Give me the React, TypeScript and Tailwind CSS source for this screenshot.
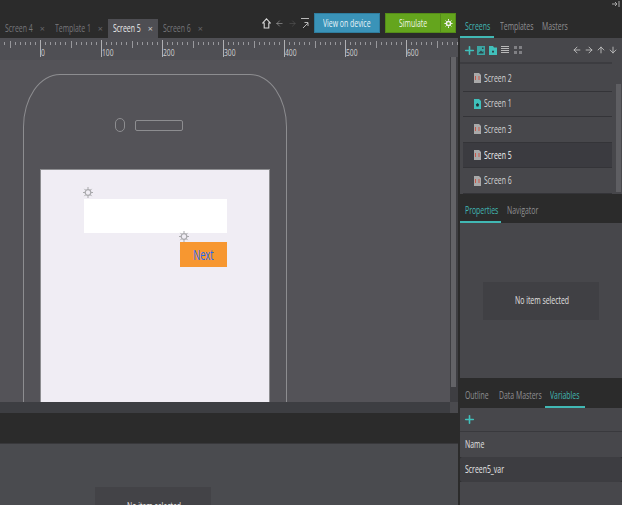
import React from "react";
import { ArrowLeft, ArrowRight, ArrowUp, ArrowDown, Plus } from "lucide-react";

const font = { fontFamily: '"Open Sans", "Noto Sans", sans-serif' };

// The reference's text is horizontally squeezed: each label sits in a fixed-width slot.
function T({ children, className = "" }: { children: React.ReactNode; className?: string }) {
  return (
    <span className={"block shrink-0 " + className}>
      <span className="inline-block origin-left scale-x-[0.69] whitespace-nowrap">{children}</span>
    </span>
  );
}

function Ruler() {
  const ticks: React.ReactNode[] = [];
  const step = 61 / 12;
  for (let i = -7; i < 84; i++) {
    const x = Math.round(40 + i * step) + 0.5;
    const n = ((i % 12) + 12) % 12;
    const y1 = n === 0 ? 2 : n === 6 ? 3 : 4;
    const y2 = n === 0 ? 19 : n === 6 ? 10 : 7;
    ticks.push(
      <line key={i} x1={x} x2={x} y1={y1} y2={y2} stroke={n === 0 ? "#b0b0b3" : "#98989c"} strokeWidth="1" />
    );
  }
  return (
    <svg width="458" height="22" className="block">
      {ticks}
    </svg>
  );
}

function RulerLabels() {
  const labels = [0, 100, 200, 300, 400, 500, 600];
  return (
    <div className="absolute left-0 top-0 h-[22px] w-full">
      {labels.map((l, i) => (
        <span
          key={l}
          className="absolute top-[9px] origin-left scale-x-[0.75] text-[9px] leading-[12px] text-[#d0d0d2]"
          style={{ left: 41 + i * 61 }}
        >
          {l}
        </span>
      ))}
    </div>
  );
}

function Tab({ label, w, active }: { label: string; w: string; active?: boolean }) {
  return (
    <div
      className={
        "flex h-[19px] items-center pl-[5px] text-[10px] " +
        (active ? "w-[50px] bg-[#4e4e53] text-[#ececec]" : "text-[#77777b]")
      }
    >
      <T className={w}>{label}</T>
      <span className={"ml-auto mr-[5px] text-[9px] " + (active ? "text-[#c8c8c8]" : "text-[#66666a]")}>×</span>
    </div>
  );
}

function FileIcon({ teal }: { teal?: boolean }) {
  if (teal) {
    return (
      <svg width="7" height="10" viewBox="0 0 7 10" className="shrink-0">
        <path d="M0 0h5l2 2v8H0z" fill="#3fc0bb" />
        <path d="M3.5 4l1.6 1.4-.6 2h-2l-.6-2z" fill="#1f2f33" />
      </svg>
    );
  }
  return (
    <svg width="7" height="10" viewBox="0 0 7 10" className="shrink-0">
      <path d="M0 0h5l2 2v8H0z" fill="#a9a9a9" />
      <rect x="1" y="3" width="1" height="4" fill="#c9594a" />
      <rect x="4.5" y="3" width="1" height="4" fill="#c9594a" />
    </svg>
  );
}

function ScreenRow({ label, teal, active }: { label: string; teal?: boolean; active?: boolean }) {
  return (
    <div
      className={
        "flex h-[25.6px] items-center border-b border-[#343438] pl-[11px] text-[10px] " +
        (active ? "bg-[#3b3b40] text-[#f4f4f4]" : "text-[#d6d6d6]")
      }
    >
      <FileIcon teal={teal} />
      <T className="ml-[3px] w-[28px]">{label}</T>
    </div>
  );
}

function Gear({ className }: { className: string }) {
  return (
    <svg
      width="10"
      height="11"
      viewBox="0 0 10 11"
      fill="none"
      stroke="#a9a9ac"
      className={"absolute " + className}
    >
      <circle cx="5" cy="5.5" r="2.8" strokeWidth="1.2" />
      <path d="M5 0v2M5 9v2M0 5.5h2M8 5.5h2M1.4 1.9l1.4 1.4M7.2 7.7l1.4 1.4M1.4 9.1l1.4-1.4M7.2 3.3l1.4-1.4" strokeWidth="1" />
    </svg>
  );
}

export default function App() {
  return (
    <div className="flex h-[505px] w-[622px] overflow-hidden bg-[#2b2b2b]" style={font}>
      <div className="flex h-full w-[458px] shrink-0 flex-col">
        <div className="flex h-[38px] shrink-0 items-end bg-[#2b2b2b]">
          <div className="flex items-end">
            <div className="w-[50px]"><Tab label="Screen 4" w="w-[27px]" /></div>
            <div className="w-[58px]"><Tab label="Template 1" w="w-[36px]" /></div>
            <Tab label="Screen 5" w="w-[27px]" active />
            <div className="w-[50px]"><Tab label="Screen 6" w="w-[27px]" /></div>
          </div>
          <div className="mb-[5px] ml-[54px] flex items-center">
            <svg width="9" height="11" viewBox="0 0 9 11" fill="none" stroke="#d8d8d8" strokeWidth="1.1">
              <path d="M4.5 .8L8.3 5H6.8v5H2.2V5H.7z" />
            </svg>
            <ArrowLeft size={9} strokeWidth={1.4} color="#b8b8b8" className="ml-[4px]" />
            <ArrowRight size={9} strokeWidth={1.4} color="#5c5c5c" className="ml-[4px]" />
            <svg width="9" height="11" viewBox="0 0 9 11" fill="none" stroke="#b8b8b8" className="ml-[4px]">
              <path d="M0 .5h8M2 10l5-5M3.5 4.5H7V8" />
            </svg>
            <div className="ml-[4px] flex h-[20px] w-[66px] items-center justify-center border border-[#2f7d9e] bg-[#3a93b8] text-[10px] text-[#e8f4f8]">
              <T className="w-[48px]">View on device</T>
            </div>
            <div className="ml-[5px] flex h-[20px] w-[56px] items-center justify-center border border-[#558c19] bg-[#64a51d] text-[10px] text-[#eef6e4]">
              <T className="w-[28px]">Simulate</T>
            </div>
            <div className="flex h-[20px] w-[15px] items-center justify-center border-y border-r border-[#558c19] bg-[#64a51d]">
              <svg width="9" height="9" viewBox="0 0 10 11" fill="none" stroke="#f2f2f2">
                <circle cx="5" cy="5.5" r="2.5" strokeWidth="1.8" />
                <path d="M5 0v2M5 9v2M0 5.5h2M8 5.5h2M1.4 1.9l1.4 1.4M7.2 7.7l1.4 1.4M1.4 9.1l1.4-1.4M7.2 3.3l1.4-1.4" strokeWidth="1.2" />
              </svg>
            </div>
          </div>
        </div>
        <div className="relative h-[22px] shrink-0 overflow-hidden bg-[#4f4f54]">
          <Ruler />
          <RulerLabels />
        </div>
        <div className="flex h-[342px] shrink-0">
          <div className="relative h-full w-[450px] overflow-hidden bg-[#545358]">
            <div className="absolute left-[23px] top-[14px] h-[420px] w-[264px] rounded-[37px/53px] border border-[#8d8d90]" />
            <div className="absolute left-[115px] top-[58px] h-[14px] w-[10px] rounded-full border border-[#8d8d90]" />
            <div className="absolute left-[135px] top-[60px] h-[11px] w-[48px] rounded-[2px] border border-[#8d8d90]" />
            <div className="absolute left-[40px] top-[109px] h-[250px] w-[230px] border border-[#8d8d90] bg-[#f0edf4]">
              <Gear className="left-[42px] top-[17px]" />
              <div className="absolute left-[43px] top-[29px] h-[34px] w-[143px] bg-white" />
              <Gear className="left-[138px] top-[61px]" />
              <div className="absolute left-[139px] top-[72px] flex h-[25px] w-[47px] items-center justify-center bg-[#f79730] text-[14px] font-medium text-[#1f68f5]">
                <span className="inline-block scale-x-[0.66] whitespace-nowrap">Next</span>
              </div>
            </div>
          </div>
          <div className="relative -mt-[3px] flex w-[8px] flex-col bg-[#3e3e42] pb-[15px]">
            <div className="ml-[1px] w-[5px] flex-1 bg-[#636367]" />
          </div>
        </div>
        <div className="flex h-[11px] shrink-0 bg-[#3d3e42]">
          <div className="w-[450px]" />
          <div className="w-[8px] bg-[#4a4a4e]" />
        </div>
        <div className="h-[30px] shrink-0 bg-[#2b2b2b]" />
        <div className="h-[62px] shrink-0 border-t border-[#38383b] bg-[#4a4b4f] pl-[95px]">
          <div className="mt-[43px] flex h-[40px] w-[116px] justify-center bg-[#434347] pt-[13px] text-[10px] leading-[12px] text-[#e8e8e8]">
            <T className="w-[53px]">No item selected</T>
          </div>
        </div>
      </div>
      <div className="ml-[2px] flex w-[162px] shrink-0 flex-col">
        <div className="relative h-[14px] shrink-0">
          <svg width="8" height="6" viewBox="0 0 8 6" className="absolute right-[2px] top-[1px]" fill="none" stroke="#a8a8a8">
            <path d="M0 3h4M3 1l2 2-2 2M7 0v6" />
          </svg>
        </div>
        <div className="flex h-[24px] shrink-0 items-center pl-[5px] text-[10px] text-[#8f8f92]">
          <div className="relative flex h-full w-[35px] items-center text-[#41b8b4]">
            <T className="w-[25px]">Screens</T>
            <div className="absolute -left-[5px] bottom-0 h-[2px] w-[34px] bg-[#41b8b4]" />
          </div>
          <T className="w-[42px]">Templates</T>
          <T className="w-[26px]">Masters</T>
        </div>
        <div className="flex h-[24px] shrink-0 items-center bg-[#47474b] pl-[3px]">
          <Plus size={13} strokeWidth={3} color="#41c0bb" />
          <svg width="8" height="9" viewBox="0 0 8 9" className="ml-[1px]">
            <path d="M0 0h8v9H0z" fill="#3ba5a3" />
            <path d="M1.5 7L4 4.5 5.5 6 6.5 5v2.5h-5zM5 1.5h1.5V3H5z" fill="#2f4448" />
          </svg>
          <svg width="8" height="9" viewBox="0 0 8 9" className="ml-[4px]">
            <path d="M0 0h4l1 1.5h3V9H0z" fill="#41c0bb" />
            <path d="M3 5.5h2M4 4.5v2.5" stroke="#2f4448" fill="none" />
          </svg>
          <svg width="8" height="8" viewBox="0 0 8 8" stroke="#b8b8b8" className="ml-[4px]">
            <path d="M0 .5h8M0 2.5h8M0 4.5h8M0 6.5h8" />
          </svg>
          <svg width="8" height="8" viewBox="0 0 8 8" fill="#808084" className="ml-[5px]">
            <rect width="3" height="3" />
            <rect x="5" width="3" height="3" />
            <rect y="5" width="3" height="3" />
            <rect x="5" y="5" width="3" height="3" />
          </svg>
          <div className="ml-auto mr-[4px] flex items-center gap-[2px]">
            <ArrowLeft size={10} color="#c8c8c8" />
            <ArrowRight size={10} color="#c8c8c8" />
            <ArrowUp size={10} color="#c8c8c8" />
            <ArrowDown size={10} color="#c8c8c8" />
          </div>
        </div>
        <div className="flex h-[132px] shrink-0 bg-[#47474b]">
          <div className="w-[152px] border-t-2 border-[#3c3c40] pl-[3px]">
            <div className="h-[2px]" />
            <ScreenRow label="Screen 2" />
            <ScreenRow label="Screen 1" teal />
            <ScreenRow label="Screen 3" />
            <ScreenRow label="Screen 5" active />
            <ScreenRow label="Screen 6" />
          </div>
          <div className="ml-[4px] flex w-[5px] flex-col pt-[22px]">
            <div className="h-[108px] bg-[#5e5e62]" />
          </div>
        </div>
        <div className="flex h-[29px] shrink-0 items-center bg-[#2b2b2b] pl-[5px] pt-[4px] text-[10px] text-[#8f8f92]">
          <div className="relative flex h-full w-[42px] items-center text-[#41b8b4]">
            <T className="w-[32px]">Properties</T>
            <div className="absolute -left-[5px] bottom-0 h-[2px] w-[41px] bg-[#41b8b4]" />
          </div>
          <T className="w-[32px]">Navigator</T>
        </div>
        <div className="flex h-[155px] shrink-0 items-center justify-center bg-[#47474b]">
          <div className="flex h-[38px] w-[116px] items-center justify-center bg-[#404044] text-[10px] text-[#e0e0e0]">
            <T className="w-[53px]">No item selected</T>
          </div>
        </div>
        <div className="flex h-[30px] shrink-0 items-center bg-[#2b2b2b] pl-[5px] pt-[4px] text-[10px] text-[#8f8f92]">
          <T className="w-[34px]">Outline</T>
          <T className="w-[51px]">Data Masters</T>
          <div className="relative flex h-full items-center text-[#41b8b4]">
            <T className="w-[30px]">Variables</T>
            <div className="absolute -left-[5px] -right-[5px] bottom-0 h-[2px] bg-[#41b8b4]" />
          </div>
        </div>
        <div className="flex h-[24px] shrink-0 items-center border-b border-[#39393d] bg-[#47474b] pl-[3px]">
          <Plus size={13} strokeWidth={3} color="#41c0bb" />
        </div>
        <div className="flex h-[25px] shrink-0 items-center bg-[#47474b] pl-[5px] text-[10px] text-[#e0e0e0]">
          <T className="w-[30px]">Name</T>
        </div>
        <div className="flex h-[25px] shrink-0 items-center rounded-[2px] bg-[#3d3d41] pl-[5px] text-[10px] text-[#e8e8e8]">
          <T className="w-[40px]">Screen5_var</T>
        </div>
        <div className="flex-1 bg-[#47474b]" />
      </div>
    </div>
  );
}
